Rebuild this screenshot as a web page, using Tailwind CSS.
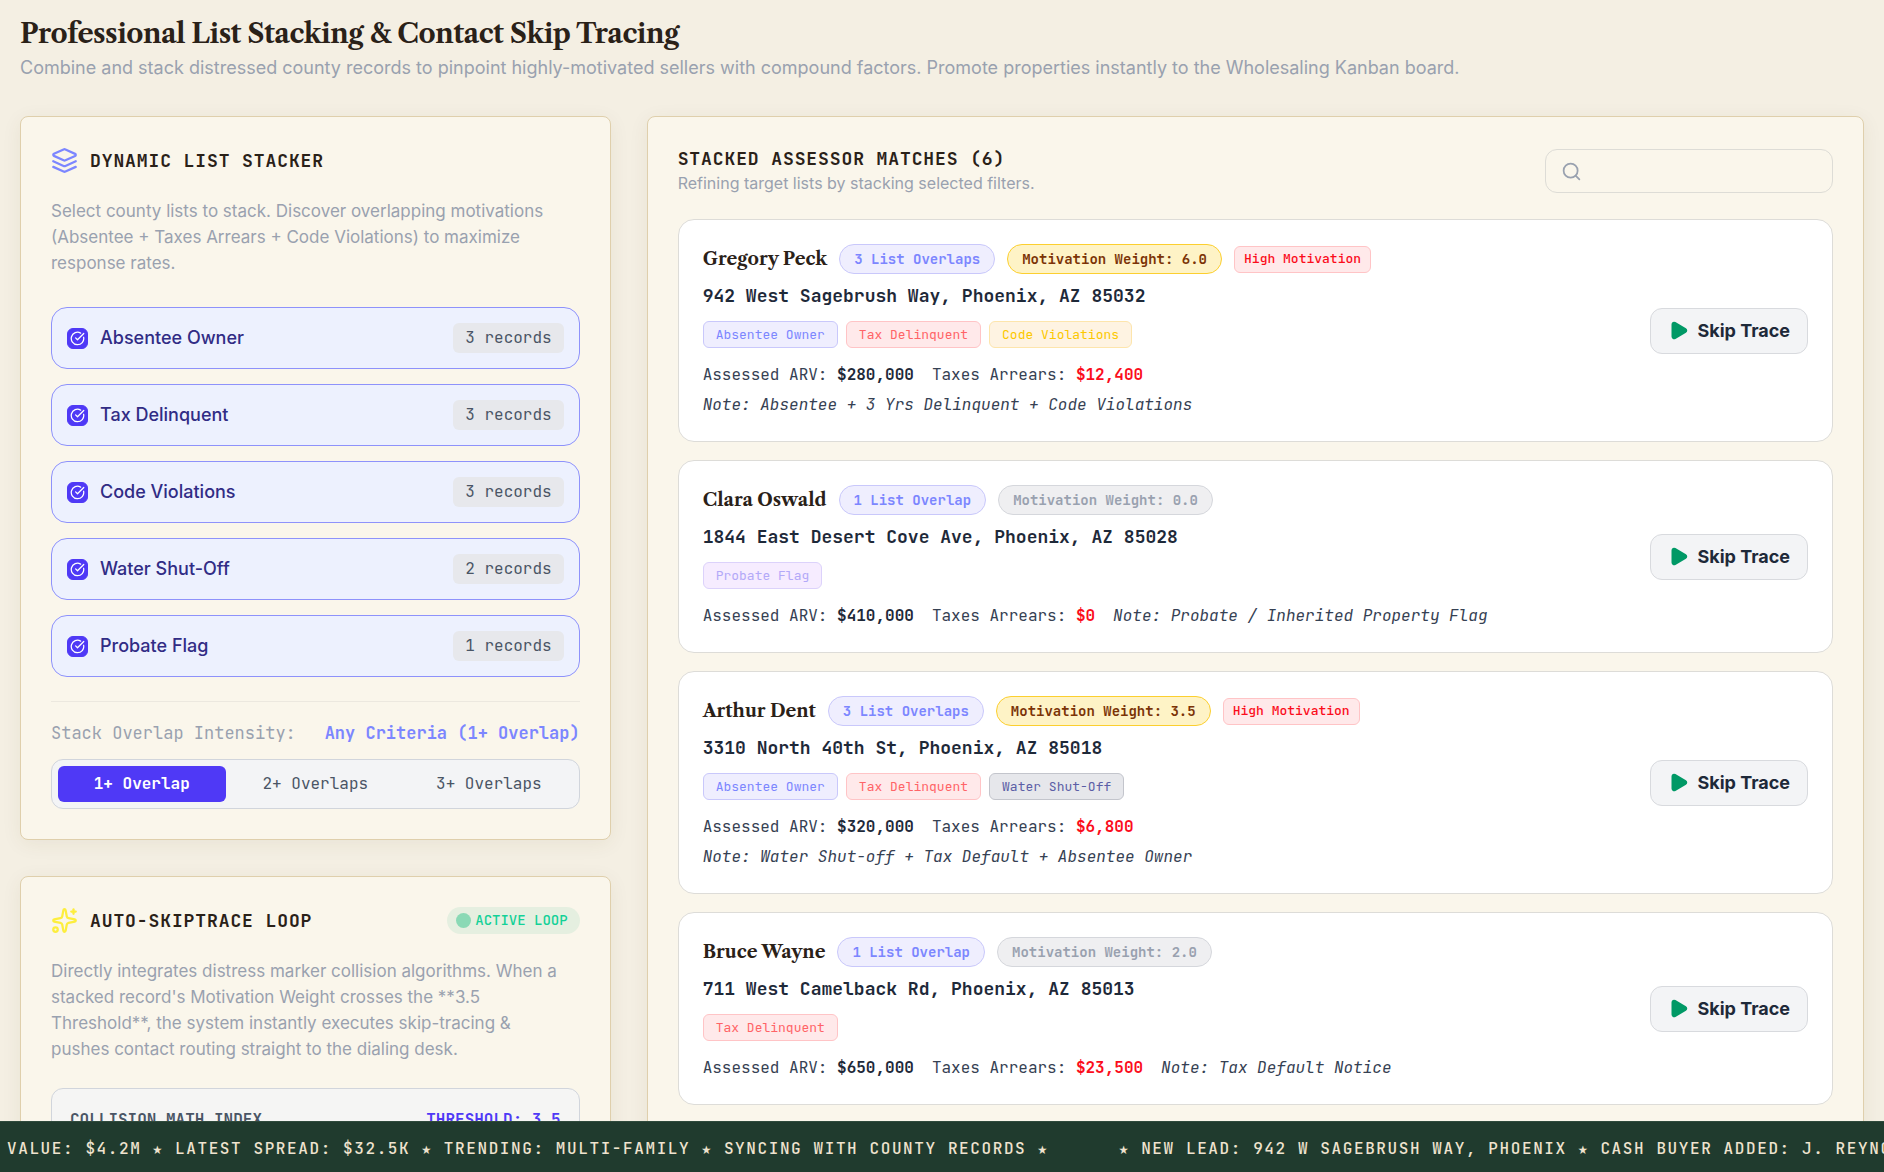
<!DOCTYPE html>
<html lang="en">
    <head>
        <meta charset="UTF-8" />
        <meta name="viewport" content="width=device-width, initial-scale=1.0" />
        <title>List Stacking & Skip Tracing</title>
        <script src="https://cdn.jsdelivr.net/npm/@tailwindcss/browser@4"></script>
    </head>
    <body class="bg-[#f4efe3] font-['Inter',sans-serif] text-[#2a2118]">
        <div class="flex h-screen flex-col">
            <main class="flex-1 overflow-y-auto px-5 pt-[13px] pb-9 [scrollbar-width:none]">
                <header class="mb-[35px]">
                    <h1
                        class="font-['Libre_Caslon_Text','Liberation_Serif',serif] text-[27px] leading-[42px] font-bold tracking-[-0.5px]"
                    >
                        Professional List Stacking &amp; Contact Skip Tracing
                    </h1>
                    <p class="text-[18px] leading-[26px] text-[#99a1af]">
                        Combine and stack distressed county records to pinpoint highly-motivated sellers with compound
                        factors. Promote properties instantly to the Wholesaling Kanban board.
                    </p>
                </header>

                <div class="grid grid-cols-1 gap-9 lg:grid-cols-3">
                    <div class="flex flex-col gap-9">
                        <!-- List stacker -->
                        <section
                            class="rounded-lg border border-[#dfcfac] bg-[#faf6eb] p-[30px] shadow-[0_4px_20px_rgba(90,70,30,0.07)]"
                        >
                            <div class="mb-6 flex items-center gap-3">
                                <svg
                                    class="size-[27px] text-[#7c86ff]"
                                    viewBox="0 0 24 24"
                                    fill="none"
                                    stroke="currentColor"
                                    stroke-width="2"
                                    stroke-linecap="round"
                                    stroke-linejoin="round"
                                >
                                    <path
                                        d="M12.83 2.18a2 2 0 0 0-1.66 0L2.6 6.08a1 1 0 0 0 0 1.83l8.58 3.91a2 2 0 0 0 1.66 0l8.58-3.9a1 1 0 0 0 0-1.83Z"
                                    />
                                    <path d="m22 12.65-9.17 4.16a2 2 0 0 1-1.66 0L2 12.65" />
                                    <path d="m22 17.65-9.17 4.16a2 2 0 0 1-1.66 0L2 17.65" />
                                </svg>
                                <h2
                                    class="font-['JetBrains_Mono','DejaVu_Sans_Mono',monospace] text-[18px] leading-6 font-semibold tracking-wider"
                                >
                                    DYNAMIC LIST STACKER
                                </h2>
                            </div>
                            <p class="pr-2 text-[17px] leading-[26px] text-[#99a1af]">
                                Select county lists to stack. Discover overlapping motivations (Absentee + Taxes
                                Arrears + Code Violations) to maximize response rates.
                            </p>
                            <div id="listOptions" class="mt-[31px] flex flex-col gap-[15px]"></div>
                            <div class="mt-6 border-t border-[#ece8df] pt-[18px]">
                                <div
                                    class="flex justify-between font-['JetBrains_Mono','DejaVu_Sans_Mono',monospace] text-[17px] leading-[26px] text-[#99a1af]"
                                >
                                    <span>Stack Overlap Intensity:</span>
                                    <span id="intensityLabel" class="font-bold text-[#7c86ff]"
                                        >Any Criteria (1+ Overlap)</span
                                    >
                                </div>
                                <div
                                    class="mt-[13px] grid grid-cols-3 gap-[6px] rounded-xl border border-[#d1d5dc] bg-[#f3f4f6] p-[6px] font-['JetBrains_Mono','DejaVu_Sans_Mono',monospace] text-[16px] leading-6 text-[#4a5565]"
                                >
                                    <button type="button" class="rounded-md bg-[#4f39f6] py-[6px] font-bold text-white">
                                        1+ Overlap
                                    </button>
                                    <button type="button" class="rounded-md py-[6px]">2+ Overlaps</button>
                                    <button type="button" class="rounded-md py-[6px]">3+ Overlaps</button>
                                </div>
                            </div>
                        </section>

                        <!-- Auto skiptrace -->
                        <section
                            class="rounded-lg border border-[#dfcfac] bg-[#faf6eb] p-[30px] shadow-[0_4px_20px_rgba(90,70,30,0.07)]"
                        >
                            <div class="mb-6 flex items-center justify-between">
                                <div class="flex items-center gap-3">
                                    <svg
                                        class="size-[27px] text-[#fdee3d]"
                                        viewBox="0 0 24 24"
                                        fill="none"
                                        stroke="currentColor"
                                        stroke-width="2"
                                        stroke-linecap="round"
                                        stroke-linejoin="round"
                                    >
                                        <path
                                            d="M11.017 2.814a1 1 0 0 1 1.966 0l1.051 5.558a2 2 0 0 0 1.594 1.594l5.558 1.051a1 1 0 0 1 0 1.966l-5.558 1.051a2 2 0 0 0-1.594 1.594l-1.051 5.558a1 1 0 0 1-1.966 0l-1.051-5.558a2 2 0 0 0-1.594-1.594l-5.558-1.051a1 1 0 0 1 0-1.966l5.558-1.051a2 2 0 0 0 1.594-1.594z"
                                        />
                                        <path d="M20 2v4" />
                                        <path d="M22 4h-4" />
                                        <circle cx="4" cy="20" r="2" />
                                    </svg>
                                    <h2
                                        class="font-['JetBrains_Mono','DejaVu_Sans_Mono',monospace] text-[18px] leading-6 font-semibold tracking-wider"
                                    >
                                        AUTO-SKIPTRACE LOOP
                                    </h2>
                                </div>
                                <span
                                    class="flex h-[27px] items-center gap-1 rounded-full bg-[#e5efe0] pr-3 pl-[9px] font-['JetBrains_Mono','DejaVu_Sans_Mono',monospace] text-[14px] font-medium text-[#13d197]"
                                >
                                    <span class="size-[15px] rounded-full bg-[#8ad9b5]"></span>
                                    ACTIVE LOOP
                                </span>
                            </div>
                            <p class="pr-2 text-[17px] leading-[26px] text-[#99a1af]">
                                Directly integrates distress marker collision algorithms. When a stacked record's
                                Motivation Weight crosses the **3.5 Threshold**, the system instantly executes
                                skip-tracing &amp; pushes contact routing straight to the dialing desk.
                            </p>
                            <div
                                class="mt-[26px] flex justify-between rounded-xl border border-[#d1d5dc] bg-[#f5f5f4] p-[18px] font-['JetBrains_Mono','DejaVu_Sans_Mono',monospace] text-[16px] leading-[26px] font-semibold text-[#4a5565]"
                            >
                                <span>COLLISION MATH INDEX</span>
                                <span class="text-[#4f39f6]">THRESHOLD: 3.5</span>
                            </div>
                        </section>
                    </div>

                    <!-- Matches -->
                    <section
                        class="rounded-lg border border-[#dfcfac] bg-[#faf6eb] p-[30px] shadow-[0_4px_20px_rgba(90,70,30,0.07)] lg:col-span-2"
                    >
                        <div class="mb-6 flex items-center justify-between">
                            <div>
                                <h2
                                    class="font-['JetBrains_Mono','DejaVu_Sans_Mono',monospace] text-[18px] leading-6 font-semibold tracking-wider"
                                >
                                    STACKED ASSESSOR MATCHES (6)
                                </h2>
                                <p class="text-[16px] leading-6 text-[#99a1af]">
                                    Refining target lists by stacking selected filters.
                                </p>
                            </div>
                            <div class="relative w-72">
                                <svg
                                    class="absolute top-3 left-4 size-[21px] text-[#99a1af]"
                                    viewBox="0 0 24 24"
                                    fill="none"
                                    stroke="currentColor"
                                    stroke-width="2"
                                    stroke-linecap="round"
                                    stroke-linejoin="round"
                                >
                                    <circle cx="11" cy="11" r="8" />
                                    <path d="m21 21-4.34-4.34" />
                                </svg>
                                <input
                                    type="text"
                                    aria-label="Search matches"
                                    class="block h-11 w-full rounded-xl border border-[#dddcd6] bg-transparent pr-4 pl-11 text-[16px] outline-none"
                                />
                            </div>
                        </div>
                        <div id="matchList" class="flex flex-col gap-[18px]"></div>
                    </section>
                </div>
            </main>

            <!-- Ticker -->
            <footer
                class="flex h-[51px] shrink-0 items-center gap-[70px] overflow-hidden border-t border-[#2f4a3c] bg-[#203b2e] pt-1 pl-[7px] font-['JetBrains_Mono','DejaVu_Sans_Mono',monospace] text-[16px] leading-6 font-medium tracking-widest whitespace-nowrap text-[#efe3cf]"
            >
                <span
                    >VALUE: $4.2M ★ LATEST SPREAD: $32.5K ★ TRENDING: MULTI-FAMILY ★ SYNCING WITH COUNTY RECORDS ★</span
                >
                <span>★ NEW LEAD: 942 W SAGEBRUSH WAY, PHOENIX ★ CASH BUYER ADDED: J. REYNOLDS</span>
            </footer>
        </div>

        <script>
            const listOptions = document.getElementById("listOptions");
            const matchList = document.getElementById("matchList");

            const LISTS = [
                { name: "Absentee Owner", records: 3 },
                { name: "Tax Delinquent", records: 3 },
                { name: "Code Violations", records: 3 },
                { name: "Water Shut-Off", records: 2 },
                { name: "Probate Flag", records: 1 },
            ];

            const TAG_STYLES = {
                "Absentee Owner": "border-[#c9c8fb] bg-[#efeefe] text-[#7c86ff]",
                "Tax Delinquent": "border-[#ffc4c6] bg-[#ffe9ea] text-[#ff6467]",
                "Code Violations": "border-[#fde5ac] bg-[#fef3e2] text-[#fcc800]",
                "Water Shut-Off": "border-[#c3c5cc] bg-[#e6e7eb] text-[#5b5ea6]",
                "Probate Flag": "border-[#dcd2fb] bg-[#f6ecff] text-[#b3a9f8]",
            };

            const MATCHES = [
                {
                    name: "Gregory Peck",
                    weight: 6,
                    address: "942 West Sagebrush Way, Phoenix, AZ 85032",
                    tags: ["Absentee Owner", "Tax Delinquent", "Code Violations"],
                    arv: 280000,
                    arrears: 12400,
                    note: "Absentee + 3 Yrs Delinquent + Code Violations",
                },
                {
                    name: "Clara Oswald",
                    weight: 0,
                    address: "1844 East Desert Cove Ave, Phoenix, AZ 85028",
                    tags: ["Probate Flag"],
                    arv: 410000,
                    arrears: 0,
                    note: "Probate / Inherited Property Flag",
                },
                {
                    name: "Arthur Dent",
                    weight: 3.5,
                    address: "3310 North 40th St, Phoenix, AZ 85018",
                    tags: ["Absentee Owner", "Tax Delinquent", "Water Shut-Off"],
                    arv: 320000,
                    arrears: 6800,
                    note: "Water Shut-off + Tax Default + Absentee Owner",
                },
                {
                    name: "Bruce Wayne",
                    weight: 2,
                    address: "711 West Camelback Rd, Phoenix, AZ 85013",
                    tags: ["Tax Delinquent"],
                    arv: 650000,
                    arrears: 23500,
                    note: "Tax Default Notice",
                },
            ];

            const money = (n) => "$" + n.toLocaleString("en-US");

            listOptions.innerHTML = LISTS.map(
                (l) => `<label class="flex h-[62px] cursor-pointer items-center gap-3 rounded-2xl border border-[#8e92fb] bg-[#edf1fe] px-[15px]">
                    <span class="relative size-[21px]">
                        <input type="checkbox" checked class="peer block size-[21px] appearance-none rounded-md border border-[#4f39f6] checked:bg-[#4f39f6]" />
                        <svg class="pointer-events-none absolute inset-0 m-auto hidden size-[15px] text-white peer-checked:block" viewBox="0 0 24 24" fill="none" stroke="currentColor" stroke-width="2" stroke-linecap="round" stroke-linejoin="round">
                            <path d="M21.801 10A10 10 0 1 1 17 3.335" />
                            <path d="m9 11 3 3L22 4" />
                        </svg>
                    </span>
                    <span class="text-[18px] leading-[26px] font-medium text-[#312c85]">${l.name}</span>
                    <span class="ml-auto rounded-md bg-[#e7e8ec] px-3 py-[3px] font-['JetBrains_Mono','DejaVu_Sans_Mono',monospace] text-[16px] leading-6 text-[#4a5565]">${l.records} records</span>
                </label>`
            ).join("");

            function weightPill(m) {
                const style =
                    m.weight >= 3.5
                        ? "border-[#fccf2f] bg-[#fef3c6] text-[#7b3306]"
                        : "border-[#d5d7dc] bg-[#efeff1] text-[#99a1af]";
                return `<span class="flex h-[30px] items-center rounded-full border px-[14px] text-[14px] font-semibold ${style}">Motivation Weight: ${m.weight.toFixed(1)}</span>`;
            }

            matchList.innerHTML = MATCHES.map(
                (m) => `<article class="flex items-center gap-6 rounded-2xl border border-[#dddcd8] bg-white p-6">
                    <div class="flex-1 font-['JetBrains_Mono','DejaVu_Sans_Mono',monospace]">
                        <div class="flex items-center gap-3">
                            <h3 class="font-['Libre_Caslon_Text','Liberation_Serif',serif] text-[18px] leading-[30px] font-bold">${m.name}</h3>
                            <span class="flex h-[30px] items-center rounded-full border border-[#c9c8fb] bg-[#efeefe] px-[14px] text-[14px] font-semibold text-[#7c86ff]">${m.tags.length} List Overlap${m.tags.length > 1 ? "s" : ""}</span>
                            ${weightPill(m)}
                            ${m.weight >= 3.5 ? `<span class="flex h-[27px] items-center rounded-md border border-[#ffc4c6] bg-[#ffe9ea] px-[9px] text-[13px] font-medium text-[#fb0d1c]">High Motivation</span>` : ""}
                        </div>
                        <p class="mt-[9px] text-[18px] leading-[26px] font-semibold text-[#1e2939]">${m.address}</p>
                        <div class="mt-3 flex gap-2">
                            ${m.tags.map((t) => `<span class="flex h-[27px] items-center rounded-md border px-3 text-[13px] ${TAG_STYLES[t]}">${t}</span>`).join("")}
                        </div>
                        <div class="mt-[15px] flex flex-wrap gap-x-[18px] gap-y-[6px] text-[16px] leading-6 text-[#364153]">
                            <span>Assessed ARV: <b class="text-[#1e2939]">${money(m.arv)}</b></span>
                            <span>Taxes Arrears: <b class="text-[#fb0d1c]">${money(m.arrears)}</b></span>
                            <span class="italic">Note: ${m.note}</span>
                        </div>
                    </div>
                    <button type="button" class="flex h-[46px] shrink-0 items-center gap-2 rounded-xl border border-[#d8dade] bg-[#f3f4f6] px-[17px] text-[18px] leading-6 font-bold text-[#1e2939]">
                        <svg class="size-[21px] text-[#009966]" viewBox="0 0 24 24" fill="currentColor" stroke="currentColor" stroke-width="2" stroke-linecap="round" stroke-linejoin="round">
                            <path d="M5 5a2 2 0 0 1 3.008-1.728l11.997 6.998a2 2 0 0 1 .003 3.458l-12 7A2 2 0 0 1 5 19z" />
                        </svg>
                        Skip Trace
                    </button>
                </article>`
            ).join("");
        </script>
    </body>
</html>
